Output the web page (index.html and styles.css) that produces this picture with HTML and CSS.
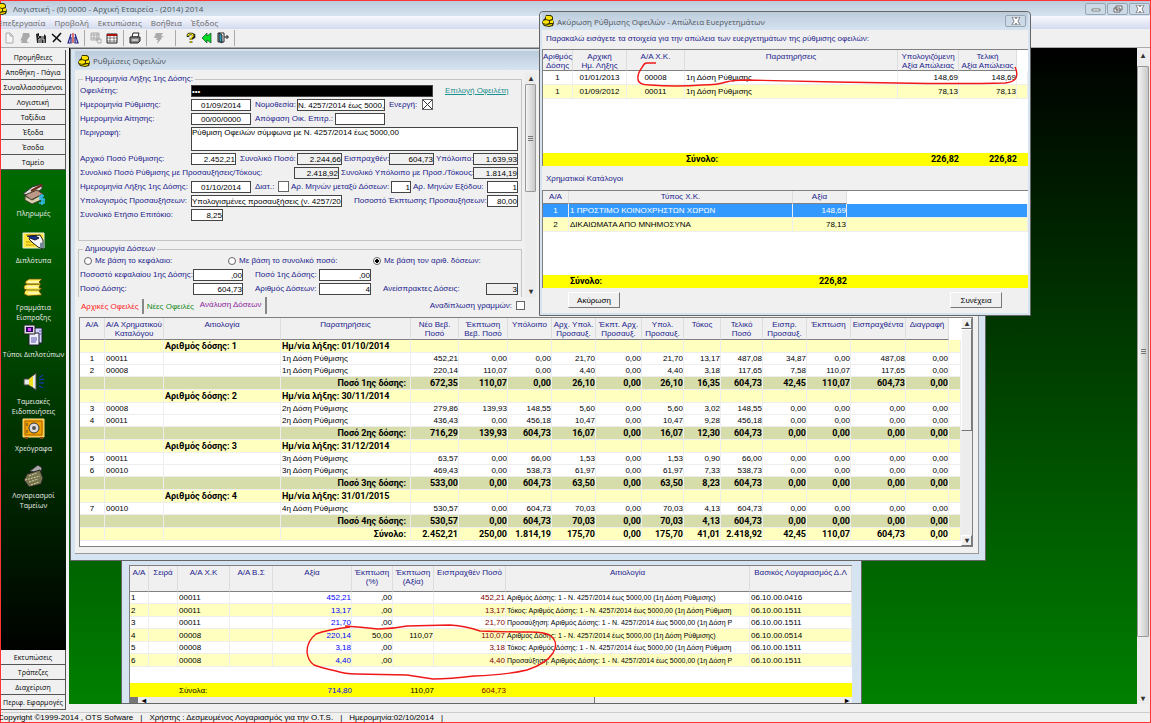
FILE: index.html
```
<!DOCTYPE html>
<html lang="el">

<head>
    <meta charset="UTF-8" />
    <meta name="viewport" content="width=device-width, initial-scale=1" />
    <title>Λογιστική - (0) 0000 - Αρχική Εταιρεία - (2014) 2014</title>
    <link rel="stylesheet" href="styles.css">
</head>

<body>
    <svg class="defs" width="0" height="0" aria-hidden="true">
        <symbol id="coins" viewBox="0 0 12 12">
            <path d="M4 0l5 0 2 2v3l1 3-1 3-4 1-5-1-2-3 1-3 2-2z" fill="#3a3600" />
            <path d="M4 1h4l2 1v2L7 5 4 4zM1 6l3-1 3 1v2L4 9 1 8zM8 6l3-1v3L8 8zM2 9l3 1 5-1v1l-3 1-4-1z" fill="#ffe400" />
        </symbol>
        <symbol id="cross" viewBox="0 0 10 8">
            <path d="M1 0h3l1 2 1-2h3L7 4l2 4H6L5 6 4 8H1l2-4z" fill="#fff" stroke="#666" stroke-width=".8" />
        </symbol>
    </svg>

    <div class="app">
        <header class="titlebar app-title">
            <svg class="title-icon"><use href="#coins" /></svg>
            <span>Λογιστική - (0) 0000 - Αρχική Εταιρεία - (2014) 2014</span>
            <div class="window-buttons">
                <button aria-label="Ελαχιστοποίηση"><svg viewBox="0 0 10 8"><path d="M1 4h8v2H1z" fill="#fff" stroke="#666" stroke-width=".8" /></svg></button>
                <button aria-label="Επαναφορά"><svg viewBox="0 0 10 8"><path d="M3 1h6v4H3zM1 3h6v4H1z" fill="#fff" stroke="#666" /><path d="M3 5h2" stroke="#666" /></svg></button>
                <button aria-label="Κλείσιμο"><svg><use href="#cross" /></svg></button>
            </div>
        </header>

        <nav class="menubar">
            <a href="#">Επεξεργασία</a>
            <a href="#">Προβολή</a>
            <a href="#">Εκτυπώσεις</a>
            <a href="#">Βοήθεια</a>
            <a href="#">Έξοδος</a>
        </nav>

        <div class="toolbar">
            <div class="tool-group">
                <button aria-label="Νέο"><svg viewBox="0 0 12 12"><path d="M3 1h4l3 3v7H3z" fill="#f6f6f6" stroke="#aaa" /><path d="M7 1v3h3" fill="none" stroke="#aaa" /></svg></button>
                <button aria-label="Άνοιγμα"><svg viewBox="0 0 12 12"><path d="M4 1h6l1 3-3 4v2l3 1H2l1-3-2 1 2-4z" fill="#aaa" /></svg></button>
                <button aria-label="Αποθήκευση"><svg viewBox="0 0 12 12"><path d="M1 2l3-1v3h5V2l2 2v7H2z" fill="#222" /><path d="M4 11V7h5v4M3 5h1M6 5h3M6 8v3" fill="none" stroke="#ddd" /></svg></button>
                <button aria-label="Διαγραφή"><svg viewBox="0 0 12 12"><path d="M1 2l9 8M10 1L2 10" stroke="#111" stroke-width="1.6" /></svg></button>
                <button aria-label="Εύρεση"><svg viewBox="0 0 12 12"><path d="M4 2L1 11h3V5M8 2l3 9H8V5" fill="#dde" stroke="#228" stroke-width="1.2" /><path d="M6 1v10" stroke="#c22" stroke-width="1.2" /></svg></button>
            </div>
            <div class="tool-group">
                <button aria-label="Πίνακας"><svg viewBox="0 0 12 12"><path d="M1 1h8v7H1zM1 3h8M1 6h8M4 1v7M7 1v7M6 7h5v4H8z" fill="none" stroke="#aaa" /></svg></button>
                <button aria-label="Λίστα"><svg viewBox="0 0 12 12"><path d="M1 2h10v9H1z" fill="#fff" stroke="#222" /><path d="M1 2h10v2H1z" fill="#a11" /><path d="M4 4v7M8 4v7M1 6h10M1 9h10" stroke="#555" stroke-width=".7" /></svg></button>
            </div>
            <div class="tool-group">
                <button aria-label="Εκτύπωση"><svg viewBox="0 0 12 12"><path d="M4 1h6l-1 4H3z" fill="#fff" stroke="#222" /><path d="M1 5h10v4l-2 2H1z" fill="#888" stroke="#222" /><path d="M3 8h6" stroke="#fff" /></svg></button>
            </div>
            <div class="tool-group tool-group-wide">
                <button aria-label="Εκτέλεση"><svg viewBox="0 0 12 12"><path d="M3 1h7L8 4h3L8 6h1l-5 6 1-4H3l1-2H1z" fill="#aaa" /></svg></button>
            </div>
            <div class="tool-group tool-group-last">
                <button aria-label="Βοήθεια"><svg viewBox="0 0 12 12"><path d="M3 5V3l1-1h3l2 1v2L6 7v1M6 9v2" fill="none" stroke="#222" stroke-width="2.6" /><path d="M3 4V3l1-1h3l1 1v1L6 6v2M6 9v2" fill="none" stroke="#fe0" stroke-width="1.2" /></svg></button>
                <button aria-label="Πίσω"><svg viewBox="0 0 12 12"><path d="M1 6l5-5v3l4-3v10L6 8v3z" fill="#0d2" stroke="#142" stroke-width=".7" /></svg></button>
                <button aria-label="Έξοδος"><svg viewBox="0 0 12 12"><path d="M1 1h6v9H1z" fill="#fff" stroke="#222" /><path d="M2 1l3 2v8l-3-2z" fill="#39b" stroke="#222" /><path d="M7 5h5M10 3v4" stroke="#222" /></svg></button>
            </div>
        </div>

        <div class="workspace">
            <aside class="sidebar">
                <div class="side-buttons">
                    <button>Προμήθειες</button>
                    <button>Αποθήκη - Πάγια</button>
                    <button>Συναλλασσόμενοι</button>
                    <button>Λογιστική</button>
                    <button>Ταξίδια</button>
                    <button>Έξοδα</button>
                    <button>Έσοδα</button>
                    <button>Ταμείο</button>
                </div>
                <div class="side-items">
                    <a href="#">
                        <svg viewBox="0 0 24 22"><path d="M1 11l9-7 10-3v5L9 13z" fill="#ddd" stroke="#333" /><path d="M3 12l12-5 6 4-12 6z" fill="#b98" stroke="#432" /><path d="M3 13v4l7 4 9-4v-5l-9 5z" fill="#d9d0b0" stroke="#443" /><path d="M9 8l11-6" stroke="#6b2c16" stroke-width="2" /><path d="M22 13h-4v3h4v4h-5M20 11v11" fill="none" stroke="#3be" stroke-width="1.6" /></svg>
                        <span>Πληρωμές</span>
                    </a>
                    <a href="#">
                        <svg viewBox="0 0 24 22"><path d="M1 3h21v15H1z" fill="#ffe83b" stroke="#eee" /><path d="M4 5h11M4 12h6M4 15h8" stroke="#b99500" /><path d="M8 6l10-1 3 5v9l-5-2-5-4-4-4z" fill="#f4f4f4" stroke="#222" /><path d="M5 6h8l4 2-4 2-5-2" fill="#14359b" stroke="#112" /><path d="M18 13l4-1v6h-4z" fill="#789" /></svg>
                        <span>Διπλότυπα</span>
                    </a>
                    <a href="#">
                        <svg viewBox="0 0 24 22"><g fill="#ffec5a" stroke="#554700" stroke-width=".8"><path d="M3 14l3-3h14l-3 3 3 4-14 1-4-2z" /><path d="M2 9l3-2h14l-2 3 2 3H5l-3-1z" /><path d="M4 4l3-2h13l-3 3 2 2H5L3 6z" /></g><path d="M6 5h11M5 10h11M6 16h11" stroke="#fff" /></svg>
                        <span>Γραμμάτια Είσπραξης</span>
                    </a>
                    <a href="#">
                        <svg viewBox="0 0 24 22"><path d="M9 4h11v15H9z" fill="#cfd4ff" stroke="#223" /><path d="M7 9h10v12H7z" fill="#eef" stroke="#223" /><path d="M9 14h6M9 16h6M9 18h5M17 7h2M17 10h2" stroke="#55a" /><path d="M2 1h11v9H2z" fill="#ddd" stroke="#222" /><path d="M4 3h7v5H4z" fill="#306" /><path d="M6 4h3v3H6z" fill="#d4f" /></svg>
                        <span>Τύποι Διπλοτύπων</span>
                    </a>
                    <a href="#">
                        <svg viewBox="0 0 24 22"><path d="M2 8h5l7-6v17l-7-5H2z" fill="#e8e8e8" stroke="#444" /><path d="M7 8l4-3v11l-4-2z" fill="#f0e020" /><path d="M17 7l4-3M17 9l5-1M17 12h5M17 15l4 2" stroke="#1836d8" /></svg>
                        <span>Ταμειακές Ειδοποιήσεις</span>
                    </a>
                    <a href="#">
                        <svg viewBox="0 0 24 22"><path d="M1 1h21v18H1z" fill="#ffb21b" stroke="#ffe28a" /><path d="M3 3h17v14H3z" fill="#f0a000" stroke="#a86400" /><circle cx="12" cy="10" r="5" fill="#ddd" stroke="#333" /><circle cx="12" cy="10" r="2" fill="#555" /><path d="M5 5v3M5 12v3" stroke="#543" /><path d="M3 20h3M18 20h3" stroke="#841" stroke-width="2" /></svg>
                        <span>Χρεόγραφα</span>
                    </a>
                    <a href="#">
                        <svg viewBox="0 0 24 22"><path d="M8 6l8-6 4 3-2 6z" fill="#aaa" stroke="#333" /><path d="M5 9l13-4 3 8-2 6-12 3-5-7z" fill="#77754f" stroke="#222" /><path d="M3 15l15-4M7 11l8-3M7 17l9-3M9 20l8-3" stroke="#d5d2a4" stroke-dasharray="2 1" /></svg>
                        <span>Λογαριασμοί Ταμείων</span>
                    </a>
                </div>
                <div class="side-buttons">
                    <button>Εκτυπώσεις</button>
                    <button>Τράπεζες</button>
                    <button>Διαχείριση</button>
                    <button>Περιφ. Εφαρμογές</button>
                </div>
            </aside>

            <main class="desktop">
                <section class="window window-entries">
                    <div class="grid-box entries-box">
                        <table class="entries">
                            <colgroup><col class="c19"><col class="c29"><col class="c52"><col class="c43"><col class="c79"><col class="c41"><col class="c41"><col class="c72"><col class="c244"><col></colgroup>
                            <thead>
                                <tr><th>Α/Α</th><th>Σειρά</th><th>Α/Α Χ.Κ</th><th>Α/Α Β.Σ</th><th>Αξία</th><th>Έκπτωση<br>(%)</th><th>Έκπτωση<br>(Αξία)</th><th>Εισπραχθέν Ποσό</th><th>Αιτιολογία</th><th>Βασικός Λογαριασμός Δ.Λ</th></tr>
                            </thead>
                            <tbody id="entriesBody"></tbody>
                        </table>
                        <table class="entries entries-total">
                            <colgroup><col class="c19"><col class="c29"><col class="c52"><col class="c43"><col class="c79"><col class="c41"><col class="c41"><col class="c72"><col class="c244"><col></colgroup>
                            <tbody>
                                <tr><td></td><td></td><td>Σύνολα:</td><td></td><td class="num blue">714,80</td><td></td><td class="num">110,07</td><td class="num maroon">604,73</td><td></td><td></td></tr>
                            </tbody>
                        </table>
                        <div class="hscroll"><i></i><b>◂</b><span></span><b>▸</b></div>
                    </div>
                </section>

                <section class="window window-main">
                    <div class="titlebar">
                        <svg class="title-icon"><use href="#coins" /></svg>
                        <span>Ρυθμίσεις Οφειλών</span>
                    </div>
                    <div class="window-body">
                        <div class="form-area">
                            <form class="forms">
                                <fieldset class="fs-main">
                                    <legend>Ημερομηνία Λήξης 1ης Δόσης:</legend>
                                    <div class="row r1">
                                        <label for="debtor">Οφειλέτης:</label><input id="debtor" class="redacted" value="•••">
                                        <a href="#">Επιλογή Οφειλέτη</a>
                                    </div>
                                    <div class="row r2">
                                        <label for="setDate">Ημερομηνία Ρύθμισης:</label><input id="setDate" class="mid" value="01/09/2014">
                                        <label for="law">Νομοθεσία:</label><input id="law" value="Ν. 4257/2014 έως 5000,00">
                                        <label for="active">Ενεργή:</label><input id="active" type="checkbox" checked>
                                    </div>
                                    <div class="row r3">
                                        <label for="reqDate">Ημερομηνία Αίτησης:</label><input id="reqDate" class="mid" value="00/00/0000">
                                        <label for="decision">Απόφαση Οικ. Επιτρ.:</label><input id="decision">
                                    </div>
                                    <div class="row r4">
                                        <label for="descr">Περιγραφή:</label><textarea id="descr">Ρύθμιση Οφειλών σύμφωνα με Ν. 4257/2014 έως 5000,00</textarea>
                                    </div>
                                    <div class="row r5">
                                        <label for="initial">Αρχικό Ποσό Ρύθμισης:</label><input id="initial" class="num" value="2.452,21">
                                        <label for="total">Συνολικό Ποσό:</label><input id="total" class="num" readonly value="2.244,66">
                                        <label for="paid" class="tight">Εισπραχθέν:</label><input id="paid" class="num" readonly value="604,73">
                                        <label for="rest" class="tight">Υπόλοιπο:</label><input id="rest" class="num" readonly value="1.639,93">
                                    </div>
                                    <div class="row r6">
                                        <label for="totalAll">Συνολικό Ποσό Ρύθμισης με Προσαυξήσεις/Τόκους:</label><input id="totalAll" class="num" readonly value="2.418,92">
                                        <label for="restAll" class="tight">Συνολικό Υπόλοιπο με Προσ./Τόκους:</label><input id="restAll" class="num" readonly value="1.814,19">
                                    </div>
                                    <div class="row r7">
                                        <label for="firstDue">Ημερομηνία Λήξης 1ης Δόσης:</label><input id="firstDue" class="mid" value="01/10/2014">
                                        <label for="keep">Διατ.:</label><input id="keep" type="checkbox">
                                        <label for="months" class="tight">Αρ. Μηνών μεταξύ Δόσεων:</label><input id="months" class="num" value="1">
                                        <label for="exitMonths" class="tight">Αρ. Μηνών Εξόδου:</label><input id="exitMonths" class="num" value="1">
                                    </div>
                                    <div class="row r8">
                                        <label for="calc">Υπολογισμός Προσαυξήσεων:</label><input id="calc" value="Υπολογισμένες προσαυξήσεις (ν. 4257/2014)">
                                        <label for="percent" class="wide">Ποσοστό Έκπτωσης Προσαυξήσεων:</label><input id="percent" class="num" value="80,00">
                                    </div>
                                    <div class="row r9">
                                        <label for="rate">Συνολικό Ετήσιο Επιτόκιο:</label><input id="rate" class="num" value="8,25">
                                    </div>
                                </fieldset>

                                <fieldset class="fs-doses">
                                    <legend>Δημιουργία Δόσεων</legend>
                                    <div class="row radios">
                                        <label><input type="radio" name="basis"> Με βάση το κεφάλαιο:</label>
                                        <label><input type="radio" name="basis"> Με βάση το συνολικό ποσό:</label>
                                        <label><input type="radio" name="basis" checked> Με βάση τον αριθ. δόσεων:</label>
                                    </div>
                                    <div class="row r10">
                                        <label for="capPct">Ποσοστό κεφαλαίου 1ης Δόσης:</label><input id="capPct" class="num" value=",00">
                                        <label for="firstAmount" class="wide">Ποσό 1ης Δόσης:</label><input id="firstAmount" class="num" value=",00">
                                    </div>
                                    <div class="row r10">
                                        <label for="amount">Ποσό Δόσης:</label><input id="amount" class="num" value="604,73">
                                        <label for="count" class="wide">Αριθμός Δόσεων:</label><input id="count" class="num" value="4">
                                        <label for="unpaid" class="wide">Ανείσπρακτες Δόσεις:</label><input id="unpaid" class="num" readonly value="3">
                                    </div>
                                </fieldset>
                            </form>
                            <div class="vscroll form-scroll"><b>▴</b><span></span><b>▾</b></div>
                        </div>

                        <div class="tabs">
                            <button class="red">Αρχικές Οφειλές</button>
                            <button class="green">Νέες Οφειλές</button>
                            <button class="purple active">Ανάλυση Δόσεων</button>
                            <label class="wrap-lines">Αναδίπλωση γραμμών: <input type="checkbox"></label>
                        </div>

                        <div class="doses-box">
                            <table class="doses">
                                <colgroup id="doseCols"></colgroup>
                                <thead>
                                    <tr><th>Α/Α</th><th>Α/Α Χρηματικού<br>Καταλόγου</th><th>Αιτιολογία</th><th>Παρατηρήσεις</th><th>Νέο Βεβ.<br>Ποσό</th><th>Έκπτωση<br>Βεβ. Ποσό</th><th>Υπόλοιπο</th><th>Αρχ. Υπολ.<br>Προσαυξ.</th><th>Έκπτ. Αρχ.<br>Προσαυξ.</th><th>Υπολ.<br>Προσαυξ.</th><th>Τόκος</th><th>Τελικό<br>Ποσό</th><th>Εισπρ.<br>Προσαυξ.</th><th>Έκπτωση</th><th>Εισπραχθέντα</th><th>Διαγραφή</th><th class="blank"></th></tr>
                                </thead>
                                <tbody id="dosesBody"></tbody>
                            </table>
                            <div class="vscroll classic"><b>▴</b><span></span><b>▾</b></div>
                        </div>
                    </div>
                </section>
            </main>
            <div class="vscroll main-scroll"><b>▴</b><span></span><b>▾</b></div>
        </div>

        <footer class="statusbar">
            <span class="copyright">Copyright ©1999-2014 , OTS Sofware</span><i>|</i>
            <span>Χρήστης : Δεσμευμένος Λογαριασμός για την O.T.S.</span><i>|</i>
            <span>Ημερομηνία:02/10/2014</span><i>|</i>
        </footer>

        <section class="dialog">
            <div class="titlebar">
                <svg class="title-icon"><use href="#coins" /></svg>
                <span>Ακύρωση Ρύθμισης Οφειλών - Απώλεια Ευεργετημάτων</span>
                <div class="window-buttons">
                    <button aria-label="Κλείσιμο"><svg><use href="#cross" /></svg></button>
                </div>
            </div>
            <div class="dialog-body">
                <p class="prompt">Παρακαλώ εισάγετε τα στοιχεία για την απώλεια των ευεργετημάτων της ρύθμισης οφειλών:</p>
                <div class="grid-box loss-box">
                    <table class="loss">
                        <colgroup><col class="c30"><col class="c54"><col class="c58"><col class="c213"><col class="c61"><col class="c58"><col></colgroup>
                        <thead>
                            <tr><th>Αριθμός<br>Δόσης</th><th>Αρχική<br>Ημ. Λήξης</th><th>Α/Α Χ.Κ.</th><th>Παρατηρήσεις</th><th>Υπολογιζόμενη<br>Αξία Απώλειας</th><th>Τελική<br>Αξία Απώλειας</th><th class="blank"></th></tr>
                        </thead>
                        <tbody>
                            <tr><td class="mid">1</td><td class="mid">01/01/2013</td><td class="mid">00008</td><td>1η Δόση Ρύθμισης</td><td class="num">148,69</td><td class="num">148,69</td><td></td></tr>
                            <tr><td class="mid">1</td><td class="mid">01/09/2012</td><td class="mid">00011</td><td>1η Δόση Ρύθμισης</td><td class="num">78,13</td><td class="num">78,13</td><td></td></tr>
                        </tbody>
                    </table>
                    <table class="loss sum">
                        <colgroup><col class="c30"><col class="c54"><col class="c58"><col class="c213"><col class="c61"><col class="c58"><col></colgroup>
                        <tbody>
                            <tr><td></td><td></td><td></td><td>Σύνολο:</td><td class="num">226,82</td><td class="num">226,82</td><td></td></tr>
                        </tbody>
                    </table>
                </div>
                <h2>Χρηματικοί Κατάλογοι</h2>
                <div class="grid-box catalog-box">
                    <table class="catalog">
                        <colgroup><col class="c26"><col class="c224"><col class="c54"><col></colgroup>
                        <thead>
                            <tr><th>Α/Α</th><th>Τύπος Χ.Κ.</th><th>Αξία</th><th class="blank"></th></tr>
                        </thead>
                        <tbody>
                            <tr class="selected"><td class="mid">1</td><td>1 ΠΡΟΣΤΙΜΟ ΚΟΙΝΟΧΡΗΣΤΩΝ ΧΩΡΩΝ</td><td class="num">148,69</td><td></td></tr>
                            <tr><td class="mid">2</td><td>ΔΙΚΑΙΩΜΑΤΑ ΑΠΟ ΜΝΗΜΟΣΥΝΑ</td><td class="num">78,13</td><td></td></tr>
                        </tbody>
                    </table>
                    <table class="catalog sum">
                        <colgroup><col class="c26"><col class="c224"><col class="c54"><col></colgroup>
                        <tbody>
                            <tr><td></td><td>Σύνολο:</td><td class="num">226,82</td><td></td></tr>
                        </tbody>
                    </table>
                </div>
                <div class="dialog-actions">
                    <button>Ακύρωση</button>
                    <button>Συνέχεια</button>
                </div>
            </div>
        </section>

        <svg class="marks" width="1151" height="723" aria-hidden="true">
            <path d="M656 63H647Q644 63 643 66Q637 74 638 79Q638 85 650 85Q676 87 702 85Q718 85 726 82Q734 80 745 80L835 82L897 83Q960 84 1005 83Q1014 82 1016 78Q1018 73 1015 67" />
            <path d="M350 627Q326 630 316 634Q307 641 307 652Q308 661 314 665Q322 668 336 671Q345 674 356 674L407 675Q420 677 433 679Q450 679 474 676Q506 675 527 670Q546 664 553 653Q559 643 551 636Q546 632 530 632Q504 632 480 631Q466 626 450 625L407 626Q392 629 378 629Q360 627 345 626" />
        </svg>
    </div>

    <script>
        const doseWidths = [25, 59, 117, 130, 48, 49, 44, 44, 46, 42, 37, 42, 44, 44, 55, 43];

        const doses = [
            {
                due: "01/10/2014",
                rows: [
                    ["1", "00011", "452,21", "0,00", "0,00", "21,70", "0,00", "21,70", "13,17", "487,08", "34,87", "0,00", "487,08", "0,00"],
                    ["2", "00008", "220,14", "110,07", "0,00", "4,40", "0,00", "4,40", "3,18", "117,65", "7,58", "110,07", "117,65", "0,00"]
                ],
                sum: ["672,35", "110,07", "0,00", "26,10", "0,00", "26,10", "16,35", "604,73", "42,45", "110,07", "604,73", "0,00"]
            },
            {
                due: "30/11/2014",
                rows: [
                    ["3", "00008", "279,86", "139,93", "148,55", "5,60", "0,00", "5,60", "3,02", "148,55", "0,00", "0,00", "0,00", "0,00"],
                    ["4", "00011", "436,43", "0,00", "456,18", "10,47", "0,00", "10,47", "9,28", "456,18", "0,00", "0,00", "0,00", "0,00"]
                ],
                sum: ["716,29", "139,93", "604,73", "16,07", "0,00", "16,07", "12,30", "604,73", "0,00", "0,00", "0,00", "0,00"]
            },
            {
                due: "31/12/2014",
                rows: [
                    ["5", "00011", "63,57", "0,00", "66,00", "1,53", "0,00", "1,53", "0,90", "66,00", "0,00", "0,00", "0,00", "0,00"],
                    ["6", "00010", "469,43", "0,00", "538,73", "61,97", "0,00", "61,97", "7,33", "538,73", "0,00", "0,00", "0,00", "0,00"]
                ],
                sum: ["533,00", "0,00", "604,73", "63,50", "0,00", "63,50", "8,23", "604,73", "0,00", "0,00", "0,00", "0,00"]
            },
            {
                due: "31/01/2015",
                rows: [
                    ["7", "00010", "530,57", "0,00", "604,73", "70,03", "0,00", "70,03", "4,13", "604,73", "0,00", "0,00", "0,00", "0,00"]
                ],
                sum: ["530,57", "0,00", "604,73", "70,03", "0,00", "70,03", "4,13", "604,73", "0,00", "0,00", "0,00", "0,00"]
            }
        ];
        const grandTotal = ["2.452,21", "250,00", "1.814,19", "175,70", "0,00", "175,70", "41,01", "2.418,92", "42,45", "110,07", "604,73", "0,00"];

        const nums = list => list.map(n => `<td class="num">${n}</td>`).join("");
        const empty = count => "<td></td>".repeat(count);

        document.getElementById("doseCols").innerHTML =
            doseWidths.map(w => `<col style="width: ${w}px">`).join("") + "<col>";

        document.getElementById("dosesBody").innerHTML = doses.map((dose, i) => {
            const no = i + 1;
            const rows = dose.rows.map(([id, code, ...values]) =>
                `<tr><td class="mid">${id}</td><td>${code}</td><td></td><td>${no}η Δόση Ρύθμισης</td>${nums(values)}<td></td></tr>`
            ).join("");
            return `<tr class="group">${empty(2)}<td>Αριθμός δόσης: ${no}</td><td>Ημ/νία λήξης: ${dose.due}</td>${empty(13)}</tr>
                ${rows}
                <tr class="subtotal">${empty(3)}<td class="num">Ποσό ${no}ης δόσης:</td>${nums(dose.sum)}<td></td></tr>`;
        }).join("") + `<tr class="group">${empty(3)}<td class="num">Σύνολο:</td>${nums(grandTotal)}<td></td></tr>`;

        const law = "Αριθμός Δόσης: 1 - Ν. 4257/2014 έως 5000,00 ";
        const entries = [
            ["00011", "452,21", ",00", "", "452,21", law + "(1η Δόση Ρύθμισης)", "06.10.00.0416"],
            ["00011", "13,17", ",00", "", "13,17", "Τόκος: " + law + "(1η Δόση Ρύθμιση", "06.10.00.1511"],
            ["00011", "21,70", ",00", "", "21,70", "Προσαύξηση: " + law + "(1η Δόση Ρ", "06.10.00.1511"],
            ["00008", "220,14", "50,00", "110,07", "110,07", law + "(1η Δόση Ρύθμισης)", "06.10.00.0514"],
            ["00008", "3,18", ",00", "", "3,18", "Τόκος: " + law + "(1η Δόση Ρύθμιση", "06.10.00.1511"],
            ["00008", "4,40", ",00", "", "4,40", "Προσαύξηση: " + law + "(1η Δόση Ρ", "06.10.00.1511"]
        ];

        document.getElementById("entriesBody").innerHTML = entries.map((e, i) => `
            <tr><td>${i + 1}</td><td></td><td>${e[0]}</td><td></td><td class="num blue">${e[1]}</td><td class="num">${e[2]}</td>
            <td class="num">${e[3]}</td><td class="num maroon">${e[4]}</td><td class="reason">${e[5]}</td><td>${e[6]}</td></tr>`).join("");
    </script>
</body>

</html>
```
FILE: styles.css
```
:root {
    --face: #f0f0f0;
    --navy: #22228c;
    --frame: #d6e3f1;
    --line: #808080;
    --cream: #ffffc0;
    --olive: #d6dcaa;
    --yellow: #ffff00;
    --ui: "Open Sans", "Noto Sans", sans-serif;
    --small: "Liberation Sans", Arial, sans-serif;
    --strong: Roboto, "Liberation Sans", sans-serif;
}

* {
    box-sizing: border-box;
}

body {
    margin: 0;
    font-family: var(--small);
    font-size: 8px;
    line-height: 9px;
    color: #000;
    overflow: hidden;
}

button,
input,
textarea {
    font: inherit;
    color: inherit;
    margin: 0;
    padding: 0;
}

.defs {
    position: absolute;
}

.app {
    position: relative;
    display: flex;
    flex-direction: column;
    height: 100vh;
    background: var(--face);
    border: 1px solid #f33;
}

/* title bars */
.titlebar {
    display: flex;
    align-items: center;
    gap: 3px;
    height: 19px;
    padding: 0 3px;
    background: linear-gradient(#bccbda, #d6e3f1);
    font-family: var(--ui);
    color: #4c545c;
    white-space: nowrap;
}

.app-title {
    height: 15px;
    flex: none;
    padding: 0;
}

.title-icon {
    width: 12px;
    height: 12px;
    flex: none;
}

.app-title .title-icon {
    margin-left: -6px;
    margin-right: 3px;
}

.window-buttons {
    display: flex;
    gap: 1px;
    margin-left: auto;
}

.window-buttons button {
    display: grid;
    place-items: center;
    width: 21px;
    height: 12px;
    border: 1px solid #98a5b4;
    border-radius: 2px;
    background: #ccd9e6;
}

.window-buttons svg {
    width: 10px;
    height: 8px;
}

.menubar {
    display: flex;
    align-items: center;
    gap: 9px;
    height: 13px;
    flex: none;
    background: linear-gradient(#f8faff, #d4daee);
    font-family: var(--ui);
}

.menubar a {
    color: #666;
    text-decoration: none;
}

.menubar a:first-child {
    margin-left: -3px;
}

.toolbar {
    display: flex;
    align-items: center;
    height: 19px;
    flex: none;
    border-bottom: 1px solid #aaa;
}

.tool-group {
    display: flex;
    gap: 4px;
    padding: 2px 5px;
    border-right: 1px solid #aaa;
}

.tool-group:first-child {
    padding-left: 2px;
}

.tool-group-wide {
    padding: 2px 10px 2px 6px;
}

.tool-group-last {
    padding-left: 9px;
}

.toolbar button {
    width: 12px;
    height: 12px;
    border: 0;
    background: none;
}

.toolbar svg {
    display: block;
    width: 12px;
    height: 12px;
}

.workspace {
    display: flex;
    flex: 1;
    min-height: 0;
}

/* left navigation */
.sidebar {
    display: flex;
    flex-direction: column;
    width: 65px;
    margin: 2px 3px 2px 0;
    background: linear-gradient(#006a00 20%, #000 92%);
    overflow: hidden;
    font-family: var(--ui);
    font-size: 7px;
}

.side-buttons {
    display: flex;
    flex-direction: column;
}

.side-buttons button {
    height: 15px;
    border: 1px solid #555;
    border-width: 0 1px 1px 0;
    background: var(--face);
    white-space: nowrap;
}

.side-items {
    display: flex;
    flex-direction: column;
    flex: 1;
    padding-top: 13px;
}

.side-items a {
    display: flex;
    flex-direction: column;
    align-items: center;
    gap: 4px;
    height: 47px;
    color: #eee;
    text-align: center;
    text-decoration: none;
    line-height: 10px;
}

.side-items svg {
    width: 24px;
    height: 22px;
    flex: none;
}

.side-items a:nth-child(4) span {
    white-space: nowrap;
}

/* MDI area */
.desktop {
    position: relative;
    flex: 1;
    margin-bottom: 8px;
    overflow: hidden;
    background: linear-gradient(#000, #008000);
}

.window {
    position: absolute;
    background: var(--frame);
    border: 1px solid #666;
    padding: 2px 6px 6px 4px;
}

.window-main {
    left: 1px;
    top: 0;
    width: 916px;
}

.window-body {
    border: 1px solid #999;
    border-width: 0 1px 1px 0;
    background: var(--face);
    padding: 3px 5px 6px 3px;
}

.window-entries {
    left: 52px;
    top: 500px;
    bottom: 0;
    width: 741px;
    padding: 16px 9px 0 7px;
}

.form-area {
    display: flex;
    gap: 3px;
    width: 458px;
}

.forms {
    flex: 1;
    color: var(--navy);
}

fieldset {
    margin: 0;
    padding: 0 2px 0 1px;
    border: 1px solid #c4c4c4;
    min-width: 0;
}

legend {
    padding: 0 2px;
    margin-left: 3px;
    height: 12px;
    line-height: 12px;
}

.fs-main {
    height: 168px;
}

.fs-doses {
    margin-top: 2px;
    border-bottom: 0;
}

.row {
    display: grid;
    grid-template-rows: 100%;
    height: 12px;
    margin-bottom: 2px;
}

.row label {
    line-height: 12px;
    white-space: nowrap;
    padding-left: 4px;
}

.row label:first-child {
    padding-left: 0;
}

.row label.tight {
    padding-left: 2px;
}

.row label.wide {
    padding-left: 12px;
}

.row input,
.row textarea {
    width: 100%;
    min-width: 0;
    border: 1px solid #444;
    border-radius: 0;
    background: #fff;
    color: #000;
    outline: 0;
    resize: none;
}

.row input[readonly] {
    background: var(--face);
}

.row input.redacted {
    background: #000;
    color: #fff;
}

.row a {
    padding-left: 12px;
    line-height: 12px;
    color: #1b9090;
    white-space: nowrap;
}

.r1 { grid-template-columns: 111px 242px 1fr; }
.r2 { grid-template-columns: 111px 60px 46px 88px 37px 11px; }
.r3 { grid-template-columns: 111px 60px 84px 50px; }
.r4 { grid-template-columns: 111px 327px; }
.r5 { grid-template-columns: 111px 45px 61px 45px 47px 45px 39px 45px; }
.r6 { grid-template-columns: 214px 45px 134px 45px; }
.r7 { grid-template-columns: 111px 60px 27px 11px 102px 20px 76px 31px; }
.r8 { grid-template-columns: 111px 151px 145px 31px; }
.r9 { grid-template-columns: 111px 32px; }
.r10 { grid-template-columns: 113px 50px 76px 52px 115px 32px; }
.radios { grid-template-columns: 146px 145px 1fr; }

.row.r4 {
    height: 24px;
}

.row label:first-child input {
    margin-left: 2px;
}

.row.radios label {
    display: flex;
    align-items: center;
    gap: 3px;
    padding-left: 2px;
}

input[type="checkbox"],
input[type="radio"] {
    appearance: none;
    width: 9px;
    height: 9px;
    border: 1px solid #666;
    background: #fff;
}

.row input[type="checkbox"] {
    width: 11px;
    height: 11px;
}

.row input[type="checkbox"]:checked {
    background: linear-gradient(45deg, transparent 46%, #333 46% 54%, transparent 54%), linear-gradient(-45deg, #fff 46%, #333 46% 54%, #fff 54%);
}

.row input[type="radio"] {
    width: 8px;
    height: 8px;
    border-radius: 50%;
}

.row input[type="radio"]:checked {
    background: radial-gradient(#000 40%, #fff 50%);
}

.mid {
    text-align: center;
}

.num {
    text-align: right;
}

/* scrollbars */
.vscroll {
    display: flex;
    flex-direction: column;
    width: 11px;
    flex: none;
    background: #ececec;
    color: #333;
}

.vscroll b,
.hscroll b {
    height: 11px;
    line-height: 11px;
    text-align: center;
}

.vscroll span {
    border: 1px solid #999;
    border-radius: 1px;
    background: repeating-linear-gradient(#777 0 1px, transparent 1px 2px) center / 5px 5px no-repeat, linear-gradient(90deg, #f4f4f4, #c8c8c8);
}

.vscroll b:last-child {
    margin-top: auto;
}

.form-scroll span {
    height: 108px;
}

.main-scroll {
    width: 12px;
    margin: 2px 1px 8px 0;
}

.main-scroll span {
    margin-top: 5px;
    height: 571px;
}

.classic b,
.classic span {
    border: 1px solid;
    border-color: #fff #777 #777 #fff;
    border-radius: 0;
    background: var(--face);
    line-height: 9px;
}

.classic span {
    flex: 0 1 102px;
}

/* tabs */
.tabs {
    display: flex;
    align-items: flex-end;
    width: 447px;
    height: 17px;
    margin-bottom: 3px;
}

.tabs button {
    height: 15px;
    padding: 0 3px;
    border: 0;
    border-right: 2px solid #888;
    background: var(--face);
}

.tabs .green {
    border-right: 0;
}

.tabs .active {
    height: 17px;
    padding: 0 3px 2px;
}

.red { color: #f22; }
.green { color: #108a20; }
.purple { color: #8b1a9b; }
.blue { color: #00f; }
.maroon { color: #800000; }

.wrap-lines {
    display: flex;
    align-items: center;
    gap: 4px;
    height: 17px;
    margin-left: auto;
    color: var(--navy);
}

/* data grids */
table {
    width: 100%;
    border-collapse: separate;
    border-spacing: 0;
    table-layout: fixed;
    background: #fff;
}

th {
    padding: 1px 0 0;
    border-right: 1px solid #ddd;
    border-bottom: 1px solid var(--line);
    background: var(--face);
    color: var(--navy);
    font-weight: normal;
    vertical-align: top;
    white-space: nowrap;
}

th.blank {
    border: 0;
    background: #fff;
}

td {
    height: 12px;
    padding: 0 1px;
    border-right: 1px solid #eee;
    border-bottom: 1px solid #eee;
    white-space: nowrap;
    overflow: hidden;
}

td.num {
    padding-right: 0;
}

td.reason {
    font-size: 7px;
}

.doses-box {
    display: flex;
    height: 230px;
    margin-left: 1px;
    border: 1px solid var(--line);
    background: #fff;
    align-items: flex-start;
}

.doses-box .vscroll {
    align-self: stretch;
}

.doses {
    flex: 1;
    width: 0;
}

.doses th {
    height: 22px;
    padding-top: 2px;
}

.group td,
.subtotal td {
    height: 13px;
    font-family: var(--strong);
    font-size: 9px;
    font-weight: bold;
}

.group td {
    background: var(--cream);
}

.subtotal td {
    background: var(--olive);
}

.doses td:nth-child(4).num {
    padding-right: 4px;
}

.grid-box {
    display: flex;
    flex-direction: column;
    justify-content: space-between;
    border: 1px solid var(--line);
    border-width: 1px 0 0 1px;
    background: #fff;
}

.c19 { width: 19px; }
.c26 { width: 26px; }
.c29 { width: 29px; }
.c30 { width: 30px; }
.c41 { width: 41px; }
.c43 { width: 43px; }
.c52 { width: 52px; }
.c54 { width: 54px; }
.c58 { width: 58px; }
.c61 { width: 61px; }
.c72 { width: 72px; }
.c79 { width: 79px; }
.c213 { width: 213px; }
.c224 { width: 224px; }
.c244 { width: 244px; }

.entries-box {
    height: 100%;
    justify-content: flex-start;
}

.entries th {
    height: 26px;
    padding-top: 2px;
}

.entries tr:nth-child(even) td {
    height: 13px;
    background: var(--cream);
}

.entries-total {
    margin-top: 16px;
}

.entries-total td {
    height: 14px;
    border: 0;
    background: var(--yellow);
}

.hscroll {
    display: flex;
    height: 6px;
    overflow: hidden;
    background: var(--face);
}

.hscroll i {
    width: 8px;
    background: #777;
}

.hscroll b {
    width: 11px;
    line-height: 8px;
}

.hscroll span {
    width: 446px;
    margin-right: auto;
    border-right: 1px solid #777;
    background: #eaeaea;
}

/* loss of benefits dialog */
.dialog {
    position: absolute;
    left: 538px;
    top: 10px;
    width: 492px;
    padding: 0 2px 2px;
    border: 1px solid #666;
    border-radius: 4px 4px 0 0;
    background: var(--frame);
}

.dialog .titlebar {
    height: 18px;
    padding: 0 2px 0 0;
}

.dialog-body {
    background: var(--face);
}

.prompt,
.dialog h2 {
    margin: 0;
    padding: 4px 4px 0;
    height: 19px;
    font-size: 8px;
    font-weight: normal;
    color: var(--navy);
}

.dialog h2 {
    height: 24px;
    padding-top: 8px;
}

.loss-box {
    height: 117px;
}

.catalog-box {
    height: 98px;
}

.loss th {
    height: 21px;
    padding-top: 2px;
}

.catalog th {
    height: 13px;
}

.loss td,
.catalog td {
    height: 14px;
}

.loss tr:nth-child(even) td,
.catalog tr:nth-child(even) td {
    background: var(--cream);
}

.catalog .selected td {
    background: #3399ff;
    color: #fff;
}

.sum td {
    height: 13px;
    border: 0;
    background: var(--yellow);
    font-family: var(--strong);
    font-size: 9px;
    font-weight: bold;
}

.dialog-actions {
    display: flex;
    justify-content: space-between;
    padding: 4px 26px 5px;
}

.dialog-actions button {
    width: 52px;
    height: 16px;
    border: 1px solid;
    border-color: #fff #777 #777 #fff;
    background: var(--face);
}

.statusbar {
    display: flex;
    gap: 7px;
    height: 10px;
    flex: none;
    border-top: 1px solid #ccc;
    white-space: nowrap;
}

.statusbar i {
    font-style: normal;
}

.copyright {
    margin-left: -3px;
}

/* red pen marks */
.marks {
    position: absolute;
    left: -1px;
    top: -1px;
    fill: none;
    stroke: #f01818;
    stroke-width: 1.4;
    pointer-events: none;
}
```
